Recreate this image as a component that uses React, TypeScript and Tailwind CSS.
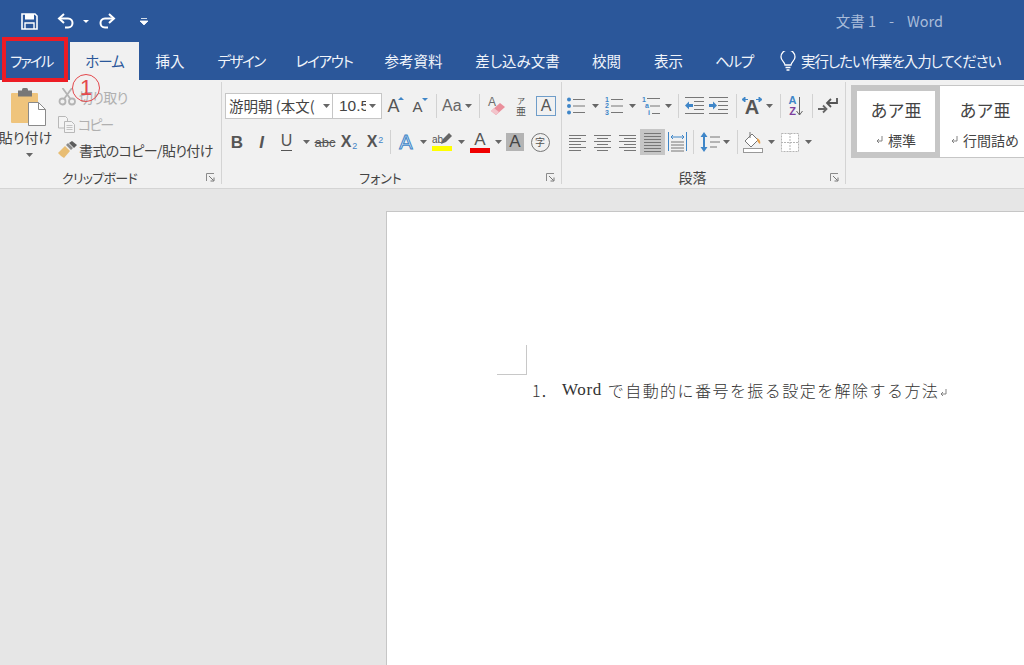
import React from "react";

const BLUE = "#3f86c8";

// small drop-down triangle used all over the ribbon
function Caret({ className = "" }: { className?: string }) {
  return (
    <div className={`flex items-center justify-center ${className}`}>
      <svg width="7" height="4" viewBox="0 0 7 4" className="shrink-0">
        <path d="M0 0h7L3.5 4z" fill="#666" />
      </svg>
    </div>
  );
}

function Sep({ className = "" }: { className?: string }) {
  return <div className={`w-px h-[24px] bg-[#d2d2d2] self-center shrink-0 ${className}`} />;
}

function Launcher() {
  return (
    <div className="w-[22px] flex items-center justify-center">
      <svg width="9" height="9" viewBox="0 0 9 9">
        <path d="M.5 8V.5H8" fill="none" stroke="#8a8a8a" />
        <path d="M3 3l4.5 4.5M8 4.5V8H4.5" fill="none" stroke="#777" />
      </svg>
    </div>
  );
}

function Lines({ rows, x = 0, w = 20 }: { rows: [number, number, number][]; x?: number; w?: number }) {
  return (
    <svg width={x + w} height="20" viewBox={`0 0 ${x + w} 20`}>
      {rows.map(([a, b, y], i) => (
        <rect key={i} x={a} y={y} width={b} height="1" fill="#777" />
      ))}
    </svg>
  );
}

function SaveIcon() {
  return (
    <svg width="17" height="17" viewBox="0 0 17 17">
      <path d="M1 1h13l2 2v13H1z" fill="none" stroke="#fff" strokeWidth="1.6" />
      <rect x="4" y="1" width="9" height="5.5" fill="#fff" />
      <path d="M4 16v-6h9v6" fill="none" stroke="#fff" strokeWidth="1.4" />
    </svg>
  );
}

function UndoIcon() {
  return (
    <svg width="18" height="16" viewBox="0 0 18 16">
      <path d="M7 1L2 5.5 7 10" fill="none" stroke="#fff" strokeWidth="2" />
      <path d="M2.5 5.5H11c6 0 6 9 0 9H8" fill="none" stroke="#fff" strokeWidth="2" />
    </svg>
  );
}

function RedoIcon() {
  return (
    <svg width="18" height="16" viewBox="0 0 18 16">
      <path d="M11 1l5 4.5L11 10" fill="none" stroke="#fff" strokeWidth="2" />
      <path d="M15.5 5.5H7c-6 0-6 9 0 9h3" fill="none" stroke="#fff" strokeWidth="2" />
    </svg>
  );
}

function PasteIcon() {
  return (
    <svg width="36" height="38" viewBox="0 0 36 38">
      <rect x="0" y="5" width="27" height="30" rx="1" fill="#efc47c" />
      <rect x="7" y="2.500" width="14" height="6" fill="#777" />
      <rect x="11" y="0" width="6" height="5" rx="1.500" fill="#777" />
      <path d="M17.500 14.500h10l7 7v16h-17z" fill="#fff" stroke="#8a8a8a" />
      <path d="M27.500 14.500v7h7" fill="none" stroke="#8a8a8a" />
    </svg>
  );
}

function ScissorsIcon() {
  return (
    <svg width="20" height="18" viewBox="0 0 20 18">
      <circle cx="4.500" cy="13.500" r="3" fill="none" stroke="#b4b4b4" strokeWidth="1.800" />
      <circle cx="14" cy="13.500" r="3" fill="none" stroke="#b4b4b4" strokeWidth="1.800" />
      <path d="M6 11L14 0M12.500 11L4.500 0" stroke="#b4b4b4" strokeWidth="1.800" />
    </svg>
  );
}

function CopyIcon() {
  return (
    <svg width="18" height="17" viewBox="0 0 18 17">
      <path d="M.5.500h7l2 2V12H.5z" fill="#f4f4f4" stroke="#b8b8b8" />
      <path d="M6.500 5.500h7l3 3v8h-10z" fill="#f4f4f4" stroke="#b8b8b8" />
      <path d="M8.500 9.500h6M8.500 11.500h6M8.500 13.500h6" stroke="#c4c4c4" />
    </svg>
  );
}

function BrushIcon() {
  return (
    <svg width="20" height="18" viewBox="0 0 20 18">
      <path d="M0 12l7-7 5 5-6 7c-2-1-4-3-6-5z" fill="#e8bd73" />
      <path d="M8 4l5 5 2-2-5-5z" fill="#8c8c8c" />
      <path d="M11 2l3-2 5 4-3 3z" fill="#5c5c5c" />
    </svg>
  );
}

function BulletIcon() {
  return (
    <svg width="20" height="20" viewBox="0 0 20 20">
      <circle cx="3" cy="3.500" r="2" fill={BLUE} />
      <circle cx="3" cy="10" r="2" fill={BLUE} />
      <circle cx="3" cy="16.500" r="2" fill={BLUE} />
      <path d="M7 3.500h12M7 10h12M7 16.500h12" stroke="#777" />
    </svg>
  );
}

function NumberIcon({ multi }: { multi?: boolean }) {
  return (
    <div className="relative w-[20px] h-[20px] font-['Liberation_Sans',sans-serif] text-[7px] font-bold leading-[7px] text-[#3f86c8]">
      <svg width="20" height="20" viewBox="0 0 20 20">
        {multi ? (
          <path d="M6 2.500h13M9 10h10M11 17.500h8" stroke="#777" />
        ) : (
          <path d="M7 3.500h12M7 10h12M7 16.500h12" stroke="#777" />
        )}
      </svg>
      <span className="absolute left-[1px] top-0">1</span>
      <span className={multi ? "absolute left-[4px] top-[6px]" : "absolute left-[1px] top-[6px]"}>{multi ? "a" : "2"}</span>
      <span className={multi ? "absolute left-[7px] top-[13px]" : "absolute left-[1px] top-[13px]"}>{multi ? "i" : "3"}</span>
    </div>
  );
}

function IndentIcon({ dir }: { dir: "in" | "out" }) {
  return (
    <svg width="20" height="18" viewBox="0 0 20 18">
      <path d="M0 .500h19M9 4.500h10M9 8.500h10M9 12.500h10M0 16.500h19" stroke="#777" />
      {dir === "out" ? (
        <path d="M0 8.500l4-4v2.500h4v3H4V12.500z" fill={BLUE} />
      ) : (
        <path d="M8 8.500l-4-4v2.500H0v3h4V12.500z" fill={BLUE} />
      )}
    </svg>
  );
}

function AlignIcon({ kind }: { kind: "left" | "center" | "right" | "full" }) {
  const rows: Record<string, [number, number, number][]> = {
    left: [[0, 17, 3], [0, 12, 6], [0, 17, 9], [0, 12, 12], [0, 17, 15], [0, 12, 18]],
    center: [[0, 17, 3], [3, 11, 6], [0, 17, 9], [3, 11, 12], [0, 17, 15], [3, 11, 18]],
    right: [[0, 17, 3], [5, 12, 6], [0, 17, 9], [5, 12, 12], [0, 17, 15], [5, 12, 18]],
    full: [[0, 17, 1], [0, 17, 4], [0, 17, 7], [0, 17, 10], [0, 17, 13], [0, 17, 16], [0, 17, 19]],
  };
  return <Lines rows={rows[kind]} w={17} />;
}

function DistributedIcon() {
  return (
    <svg width="19" height="20" viewBox="0 0 19 20">
      <path d="M.500 0v19M18.500 0v19" stroke={BLUE} />
      <path d="M3 5h13M5 3L3 5l2 2M14 3l2 2-2 2" fill="none" stroke={BLUE} />
      <path d="M3 10h13M3 13h13M3 16h13M3 19h13" stroke="#777" />
    </svg>
  );
}

function LineSpacingIcon() {
  return (
    <svg width="20" height="20" viewBox="0 0 20 20">
      <path d="M4 0l3.500 5H5v10h2.500L4 20 .5 15H3V5H.5z" fill={BLUE} />
      <path d="M10 5h10M10 10h10M10 15h7" stroke="#777" />
    </svg>
  );
}

function ShadingIcon() {
  return (
    <svg width="20" height="22" viewBox="0 0 20 22">
      <path d="M2 10l7-7 6 6-7 7z" fill="#fff" stroke="#777" />
      <path d="M7 1v6" stroke="#777" />
      <path d="M14 7c2 1 4 3 3 6-2-1-3-3-3-6z" fill="#e9a04b" />
      <rect x=".5" y="17.500" width="19" height="4" fill="#fff" stroke="#999" />
    </svg>
  );
}

function BordersIcon() {
  return (
    <svg width="18" height="19" viewBox="0 0 18 19">
      <path d="M.500.500h17v18H.500z" fill="#fff" stroke="#b5b5b5" strokeDasharray="2 1" />
      <path d="M9 0v19M0 9.500h18" stroke="#b5b5b5" strokeDasharray="2 1" />
    </svg>
  );
}

function ReturnIcon() {
  return (
    <svg width="20" height="18" viewBox="0 0 20 18">
      <path d="M19 1v5h-9" fill="none" stroke="#555" strokeWidth="1.800" />
      <path d="M13 2L9 6l4 4" fill="none" stroke="#555" strokeWidth="1.800" />
      <path d="M0 12h8M5 8.500L8.500 12 5 15.500" fill="none" stroke="#666" strokeWidth="1.800" />
    </svg>
  );
}

function EraserIcon() {
  return (
    <div className="relative w-[18px] h-[20px]">
      <span className="absolute left-0 top-[-3px] text-[12px] text-[#6b6b6b] font-['Liberation_Sans',sans-serif]">A</span>
      <svg width="18" height="20" viewBox="0 0 18 20" className="absolute left-0 top-0">
        <path d="M3 15l9-8 5 4-9 8z" fill="#ea8f9b" />
        <path d="M3 15l3-3 5 4-3 3z" fill="#f3c4cb" />
      </svg>
    </div>
  );
}

function BulbIcon() {
  return (
    <svg width="16" height="20" viewBox="0 0 16 20">
      <path d="M5 14c0-3-4-4-4-8a7 7 0 0 1 14 0c0 4-4 5-4 8z" fill="none" stroke="#fff" strokeWidth="1.300" />
      <path d="M5.500 16.500h5M6.500 19h3" stroke="#fff" strokeWidth="1.300" />
    </svg>
  );
}

function HighlightPen() {
  return (
    <svg width="11" height="12" viewBox="0 0 11 12" className="ml-[-2px]">
      <path d="M0 11l2-5 6-6 3 3-6 6z" fill="#666" />
    </svg>
  );
}

function Pilcrow({ className = "" }: { className?: string }) {
  return (
    <svg width="7" height="8" viewBox="0 0 7 8" className={className}>
      <path d="M6 0v5H1M3 3L1 5l2 2" fill="none" stroke="#777" strokeWidth=".9" />
    </svg>
  );
}

const tabs = [
  { label: "挿入", cls: "w-[30px] ml-[16px]" },
  { label: "デザイン", cls: "w-[48px] ml-[32px] tracking-[-1.500px]" },
  { label: "レイアウト", cls: "w-[56px] ml-[31px] tracking-[-1.200px]" },
  { label: "参考資料", cls: "w-[59px] ml-[32px]" },
  { label: "差し込み文書", cls: "w-[83px] ml-[33px]" },
  { label: "校閲", cls: "w-[29px] ml-[33px]" },
  { label: "表示", cls: "w-[29px] ml-[33px]" },
  { label: "ヘルプ", cls: "w-[38px] ml-[32px] tracking-[-1.300px]" },
];

export default function App() {
  return (
    <div className="relative w-[1024px] h-[665px] overflow-hidden flex flex-col bg-[#e6e6e6] font-['Noto_Sans_CJK_JP',sans-serif] [font-feature-settings:'palt']">
      {/* title bar */}
      <div className="h-[42px] bg-[#2b579a] flex items-center shrink-0">
        <div className="ml-[21px] w-[17px] flex"><SaveIcon /></div>
        <div className="ml-[19px] w-[18px] flex"><UndoIcon /></div>
        <svg width="6" height="3" viewBox="0 0 6 3" className="ml-[8px]"><path d="M0 0h6L3 3z" fill="#fff" /></svg>
        <div className="ml-[9px] w-[18px] flex"><RedoIcon /></div>
        <svg width="8" height="7" viewBox="0 0 8 7" className="ml-[24px]"><path d="M1 .500h6M0 3h8l-4 4z" stroke="#fff" strokeWidth=".8" fill="#fff" /></svg>
        <div className="ml-auto mr-[81px] text-[14.500px] text-[#a9bcd9] whitespace-pre [font-feature-settings:normal]">文書 1    -    Word</div>
      </div>

      {/* tabs */}
      <div className="h-[38px] bg-[#2b579a] flex items-center shrink-0 text-[14.500px] text-[#f0f4fa] leading-none">
        <div className="w-[70px] pl-[10px] whitespace-nowrap tracking-[-2px]">ファイル</div>
        <div className="w-[69px] h-full bg-[#f1f1f1] text-[#2b579a] flex items-center justify-center tracking-[-1px]">ホーム</div>
        {tabs.map((t) => (
          <div key={t.label} className={`${t.cls} whitespace-nowrap flex justify-center`}>{t.label}</div>
        ))}
        <div className="ml-[27px] flex"><BulbIcon /></div>
        <div className="ml-[5px] whitespace-nowrap tracking-[-1.050px]">実行したい作業を入力してください</div>
      </div>

      {/* ribbon */}
      <div className="h-[109px] bg-[#f1f1f1] border-b border-[#d4d4d4] flex shrink-0 text-[#444]">
        {/* clipboard */}
        <div className="w-[221px] flex flex-col">
          <div className="flex h-[87px]">
            <div className="w-[58px] flex flex-col items-center pt-[8px]">
              <div><PasteIcon /></div>
              <div className="mt-[1px] mr-[7px] text-[14px] leading-[20px] whitespace-nowrap">貼り付け</div>
              <Caret className="h-[16px] ml-[1px]" />
            </div>
            <div className="flex flex-col pt-[7px]">
              <div className="flex items-center h-[20px] text-[#b0b0b0] text-[14px]">
                <ScissorsIcon /><span className="ml-[1px] whitespace-nowrap tracking-[-0.700px]">切り取り</span>
              </div>
              <div className="flex items-center h-[18px] mt-[8px] text-[#b0b0b0] text-[14px]">
                <CopyIcon /><span className="ml-[2px] whitespace-nowrap tracking-[-2px]">コピー</span>
              </div>
              <div className="flex items-center h-[20px] mt-[7px] text-[14px]">
                <BrushIcon /><span className="ml-[1px] whitespace-nowrap tracking-[-0.600px]">書式のコピー/貼り付け</span>
              </div>
            </div>
          </div>
          <div className="flex-1 flex items-center">
            <div className="flex-1 text-center text-[13px] tracking-[-0.700px]">クリップボード</div>
            <Launcher />
          </div>
        </div>
        <div className="w-px h-[102px] mt-[2px] bg-[#d4d4d4]" />

        {/* font */}
        <div className="w-[339px] flex flex-col">
          <div className="h-[87px] pl-[3px] pt-[13px] flex flex-col gap-[10px]">
            <div className="flex h-[26px] items-center">
              <div className="w-[157px] h-[26px] flex bg-white border border-[#c6c6c6] text-[14.500px] text-[#444] overflow-hidden">
                <div className="w-[107px] border-r border-[#c6c6c6] flex items-center pl-[3px] pr-[1px] overflow-hidden">
                  <span className="whitespace-nowrap overflow-hidden flex-1">游明朝 (本文(</span>
                  <Caret className="w-[10px] shrink-0" />
                </div>
                <div className="flex-1 flex items-center pl-[6px] overflow-hidden">
                  <span className="font-['Liberation_Sans',sans-serif] text-[15.500px] w-[27px] overflow-hidden whitespace-nowrap">10.5</span>
                  <Caret className="w-[12px]" />
                </div>
              </div>
              <div className="w-[23px] flex justify-center relative text-[18px] font-['Liberation_Sans',sans-serif] text-[#555] leading-none">
                A<svg width="6" height="3" viewBox="0 0 6 3" className="absolute right-[1px] top-[0px]"><path d="M0 3h6L3 0z" fill={BLUE} /></svg>
              </div>
              <div className="w-[25px] flex justify-center relative text-[15px] font-['Liberation_Sans',sans-serif] text-[#555] leading-none">
                A<svg width="6" height="3" viewBox="0 0 6 3" className="absolute right-[2px] top-[-1px]"><path d="M0 0h6L3 3z" fill={BLUE} /></svg>
              </div>
              <Sep className="ml-[6px]" />
              <div className="ml-[5px] w-[22px] text-[16px] font-['Liberation_Sans',sans-serif] text-[#666] leading-none">Aa</div>
              <Caret className="w-[8px]" />
              <Sep className="ml-[7px]" />
              <div className="ml-[5px] w-[24px] flex justify-center"><EraserIcon /></div>
              <div className="w-[24px] flex flex-col items-center text-[#555] font-normal leading-none">
                <span className="text-[8px] leading-[9px]">ア</span>
                <span className="text-[10px] leading-[12px]">亜</span>
              </div>
              <div className="ml-[3px] w-[20px] h-[20px] border border-[#6f9dc9] flex items-center justify-center text-[16px] font-['Liberation_Sans',sans-serif] text-[#555] leading-none">A</div>
            </div>
            <div className="flex h-[26px] items-center font-['Liberation_Sans',sans-serif] text-[#555] leading-none">
              <div className="w-[24px] text-center font-bold text-[17px]">B</div>
              <div className="w-[25px] text-center italic font-bold text-[17px]">I</div>
              <div className="w-[25px] flex flex-col items-center text-[16px]"><span>U</span><span className="w-[11px] h-[1.500px] bg-[#555] mt-[1px]" /></div>
              <Caret className="w-[14px]" />
              <div className="w-[24px] text-center text-[13px] line-through">abc</div>
              <div className="w-[24px] text-center text-[16px] font-bold">X<sub className="text-[9px] font-normal text-[#3f86c8] ml-[1px]">2</sub></div>
              <div className="w-[28px] text-center text-[16px] font-bold">X<sup className="text-[9px] font-normal text-[#3f86c8] ml-[1px]">2</sup></div>
              <Sep className="ml-px" />
              <div className="ml-px w-[28px] text-center text-[20px] text-[#d9e8f6] [-webkit-text-stroke:1px_#3f86c8]">A</div>
              <Caret className="w-[7px]" />
              <div className="w-[30px] flex flex-col items-center">
                <div className="flex items-end h-[12px] text-[10px] leading-[10px] text-[#555]">ab<HighlightPen /></div>
                <span className="w-[20px] h-[5px] bg-[#ffff00] mt-[1px]" />
              </div>
              <Caret className="w-[8px]" />
              <div className="w-[30px] flex flex-col items-center">
                <span className="text-[17px] leading-[15px]">A</span>
                <span className="w-[20px] h-[5px] bg-[#f00000] mt-[1px]" />
              </div>
              <Caret className="w-[7px]" />
              <div className="w-[26px] flex justify-center"><span className="w-[18px] h-[18px] bg-[#b4b4b4] text-[17px] leading-[18px] text-center text-[#444]">A</span></div>
              <div className="w-[24px] flex justify-center">
                <span className="w-[19px] h-[19px] rounded-full border-[1.500px] border-[#777] text-center text-[10px] leading-[16px] font-['Noto_Sans_CJK_JP',sans-serif]">字</span>
              </div>
            </div>
          </div>
          <div className="flex-1 flex items-center">
            <div className="flex-1 text-center text-[13px]">フォント</div>
            <Launcher />
          </div>
        </div>
        <div className="w-px h-[102px] mt-[2px] bg-[#d4d4d4]" />

        {/* paragraph */}
        <div className="w-[283px] flex flex-col">
          <div className="h-[87px] pt-[13px] flex flex-col gap-[10px]">
            <div className="flex h-[26px] items-center pl-[4px]">
              <div className="w-[20px] flex justify-center"><BulletIcon /></div>
              <Caret className="w-[18px]" />
              <div className="w-[20px] flex justify-center"><NumberIcon /></div>
              <Caret className="w-[16px]" />
              <div className="w-[22px] flex justify-center"><NumberIcon multi /></div>
              <Caret className="w-[12px]" />
              <Sep className="ml-[4px]" />
              <div className="ml-[4px] w-[24px] flex justify-center"><IndentIcon dir="out" /></div>
              <div className="w-[24px] flex justify-center"><IndentIcon dir="in" /></div>
              <Sep className="ml-[5px]" />
              <div className="ml-px w-[28px] flex flex-col items-center font-['Liberation_Sans',sans-serif] leading-none">
                <svg width="20" height="5" viewBox="0 0 20 5"><path d="M0 2.500L3 0v5zM20 2.500L17 0v5zM3 2.500h3M14 2.500h3" fill={BLUE} stroke={BLUE} /></svg>
                <span className="text-[20px] font-bold text-[#555] leading-[15px] mt-[-2px]">A</span>
              </div>
              <Caret className="w-[6px]" />
              <Sep className="ml-[8px]" />
              <div className="w-[30px] flex items-center justify-center font-['Liberation_Sans',sans-serif] font-bold text-[11px] leading-[11px]">
                <div className="flex flex-col items-center"><span className="text-[#3f86c8]">A</span><span className="text-[#7e3f9d]">Z</span></div>
                <svg width="7" height="20" viewBox="0 0 7 20"><path d="M3.500 1v18M.5 15l3 4 3-4" fill="none" stroke="#666" /></svg>
              </div>
              <Sep className="ml-px" />
              <div className="w-[30px] flex justify-center"><ReturnIcon /></div>
            </div>
            <div className="flex h-[26px] items-center pl-[3px]">
              <div className="w-[25px] flex justify-center"><AlignIcon kind="left" /></div>
              <div className="w-[25px] flex justify-center"><AlignIcon kind="center" /></div>
              <div className="w-[25px] flex justify-center"><AlignIcon kind="right" /></div>
              <div className="w-[25px] h-[26px] bg-[#c6c6c6] flex items-center justify-center"><AlignIcon kind="full" /></div>
              <div className="w-[24px] flex justify-center"><DistributedIcon /></div>
              <Sep className="ml-[4px]" />
              <div className="ml-[2px] w-[28px] flex justify-center"><LineSpacingIcon /></div>
              <Caret className="w-[5px]" />
              <Sep className="ml-[8px]" />
              <div className="w-[30px] flex justify-center"><ShadingIcon /></div>
              <Caret className="w-[6px]" />
              <div className="ml-[2px] w-[28px] flex justify-center"><BordersIcon /></div>
              <Caret className="w-[8px]" />
            </div>
          </div>
          <div className="flex-1 flex items-center">
            <div className="flex-1 text-center text-[14px]">段落</div>
            <Launcher />
          </div>
        </div>
        <div className="w-px h-[102px] mt-[2px] bg-[#d4d4d4]" />

        {/* styles gallery */}
        <div className="flex-1 pl-[5px] pt-[5px] overflow-hidden">
          <div className="w-[300px] h-[73px] bg-white border border-[#c6c6c6] flex">
            <div className="w-[88px] h-full border-[5px] border-[#c6c6c6] flex flex-col items-center text-[#444] [font-feature-settings:normal]">
              <div className="mt-[8px] text-[17px] leading-[22px] whitespace-nowrap">あア亜</div>
              <div className="mt-[10px] flex items-center text-[14px] leading-[18px]"><Pilcrow className="mr-[5px]" />標準</div>
            </div>
            <div className="w-[90px] flex flex-col items-center text-[#444] [font-feature-settings:normal]">
              <div className="mt-[13px] text-[17px] leading-[22px] whitespace-nowrap">あア亜</div>
              <div className="mt-[10px] flex items-center text-[14px] leading-[18px] whitespace-nowrap"><Pilcrow className="mr-[5px]" />行間詰め</div>
            </div>
          </div>
        </div>
      </div>

      {/* document area */}
      <div className="flex-1 pl-[386px] pt-[22px] overflow-hidden">
        <div className="w-[700px] h-[500px] bg-white border border-[#c6c6c6] pl-[110px] pt-[133px]">
          <div className="w-[30px] h-[30px] border-r border-b border-[#c8c8c8]" />
          <div className="ml-[35px] mt-[4px] flex items-center text-[16px] leading-[22px] text-[#333] whitespace-nowrap font-light [font-feature-settings:normal]">
            <span className="w-[30px]">1．</span>
            <span className="font-['Liberation_Serif',serif] font-normal text-[17px] tracking-[0.6px] mr-[6px]">Word</span>
            <span className="tracking-[1.450px]">で自動的に番号を振る設定を解除する方法</span>
            <Pilcrow className="ml-[1px] mt-[5px]" />
          </div>
        </div>
      </div>

      {/* annotation over the screenshot */}
      <div className="absolute left-[2px] top-[37px] w-[66px] h-[45px] border-[4px] border-[#ed1c24]" />
      <div className="absolute left-[72px] top-[74px] w-[28px] h-[28px] rounded-full border-[1.500px] border-[#e4484c] flex items-center justify-center text-[#e4484c] text-[22px] leading-none font-['Liberation_Sans',sans-serif]">1</div>
    </div>
  );
}
